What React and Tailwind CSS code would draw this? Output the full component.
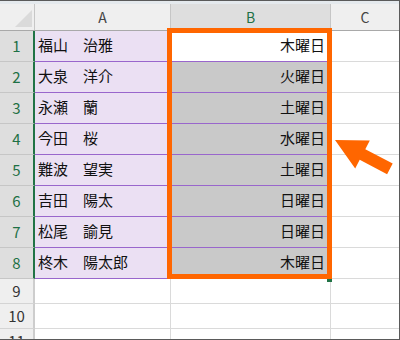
const rows = [
  ["福山　治雅", "木曜日"],
  ["大泉　洋介", "火曜日"],
  ["永瀬　蘭", "土曜日"],
  ["今田　桜", "水曜日"],
  ["難波　望実", "土曜日"],
  ["吉田　陽太", "日曜日"],
  ["松尾　諭見", "日曜日"],
  ["柊木　陽太郎", "木曜日"],
];

export default function App() {
  return (
    <div className="relative w-[400px] h-[340px] overflow-hidden bg-white border-t border-r border-b border-[#5a5a5a] font-['Noto_Sans_CJK_JP',sans-serif]">
      <div className="h-[3px] bg-[#e4e9ed]" />
      {/* column header */}
      <div className="flex h-[27px] border-b border-[#a9a9a9] bg-[#efefef] text-[14px] leading-none">
        <div className="relative w-[35px] border-r border-[#c6c6c6]">
          <svg className="absolute left-0 top-0" width="34" height="26" viewBox="0 0 34 26">
            <polygon points="32,6 32,23 15,23" fill="#dadada" />
          </svg>
        </div>
        <div className="w-[136px] border-r border-[#c6c6c6] flex items-center justify-center text-[#444]">A</div>
        <div className="w-[160px] border-r border-[#c6c6c6] bg-[#dedede] flex items-center justify-center text-[#1e7145]">B</div>
        <div className="flex-1 flex items-center justify-center text-[#444]">C</div>
      </div>
      {/* data rows */}
      {rows.map(([name, day], i) => (
        <div key={i} className="flex h-[31px]">
          <div className="w-[35px] bg-[#dedede] border-r-2 border-r-[#217346] border-b border-b-[#c6c6c6] flex items-center justify-center text-[15px] text-[#1e7145]">
            {i + 1}
          </div>
          <div className="w-[136px] bg-[#ebe0f3] border-r border-r-[#d4d4d4] border-b border-b-[#9966cc] flex items-center pl-[3px] pb-[2px] text-[15px] text-[#111] whitespace-pre">
            {name}
          </div>
          <div className={`w-[160px] border-r border-r-[#d4d4d4] border-b border-b-[#9966cc] flex items-center justify-end pr-[5px] pb-[2px] text-[15px] text-[#111] ${i === 0 ? "bg-white" : "bg-[#c9c9c9]"}`}>
            {day}
          </div>
          <div className="flex-1 border-b border-b-[#dadada]" />
        </div>
      ))}
      {[9, 10, 11].map((n) => (
        <div key={n} className="flex h-[25px]">
          <div className="w-[35px] bg-[#efefef] border-r-2 border-r-[#cdcdcd] border-b border-b-[#d4d4d4] flex items-center justify-center text-[15px] text-[#333]">
            {n}
          </div>
          <div className="w-[136px] border-r border-r-[#dadada] border-b border-b-[#dadada]" />
          <div className="w-[160px] border-r border-r-[#dadada] border-b border-b-[#dadada]" />
          <div className="flex-1 border-b border-b-[#dadada]" />
        </div>
      ))}
      {/* selection box */}
      <div className="absolute left-[167px] top-[27px] w-[165px] h-[251px] border-[5px] border-[#ff6600]" />
      <div className="absolute left-[327px] top-[278px] w-[5px] h-[3px] bg-[#217346]" />
      {/* arrow */}
      <svg className="absolute left-[330px] top-[134px]" width="70" height="45" viewBox="0 0 70 45">
        <polygon
          points="5,5 39.8,5.6 35.3,14.2 62.7,28.6 57.1,39.2 29.7,24.8 25.2,33.4"
          fill="#ff6600"
        />
      </svg>
    </div>
  );
}
